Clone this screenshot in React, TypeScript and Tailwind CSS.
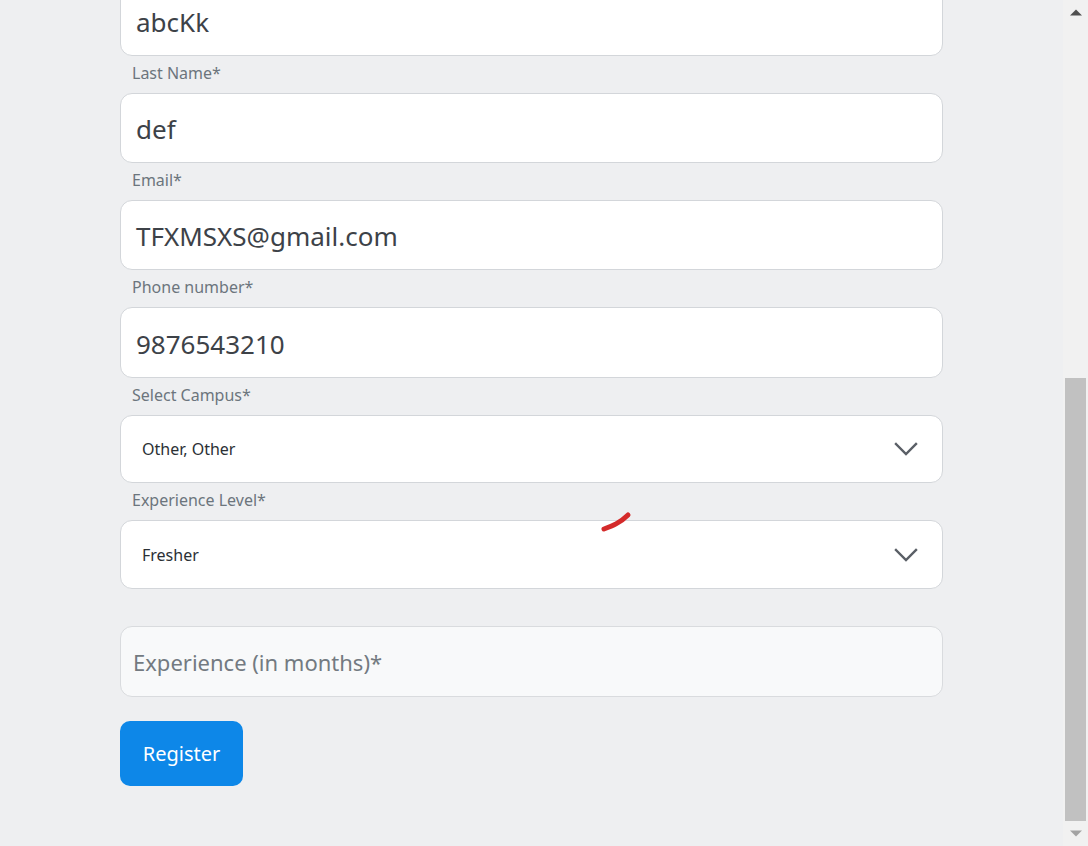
import React from "react";

const font = { fontFamily: '"Noto Sans", "Open Sans", sans-serif' };

function Label({ children }: { children?: React.ReactNode }) {
  return (
    <div className="h-[37px] pl-[12px] pt-[5px] text-[16px] leading-[24px] text-[#6c757d]">
      {children}
    </div>
  );
}

function TextField({ value, tall }: { value: string; tall?: boolean }) {
  return (
    <div
      className={`flex ${tall ? "h-[71px]" : "h-[70px]"} items-center rounded-[12px] border border-[#d3d6da] bg-white pl-[15px] pt-[3px] text-[26px] text-[#3d4248]`}
    >
      {value}
    </div>
  );
}

function Chevron() {
  return (
    <svg width="24" height="14" viewBox="0 0 24 14" fill="none">
      <path d="M2 2 L12 12 L22 2" stroke="#5a5f66" strokeWidth="2.4" strokeLinecap="square" />
    </svg>
  );
}

function SelectField({ value, short }: { value: string; short?: boolean }) {
  return (
    <div
      className={`flex ${short ? "h-[68px]" : "h-[69px]"} items-center justify-between rounded-[12px] border border-[#d3d6da] bg-white pl-[21px] pr-[24px] text-[16px] text-[#2b3035]`}
    >
      <span>{value}</span>
      <Chevron />
    </div>
  );
}

function Scrollbar() {
  return (
    <div className="flex h-[846px] w-[25px] flex-col bg-[#f1f1f1]">
      <div className="flex h-[25px] items-center justify-center">
        <svg width="12" height="7" viewBox="0 0 12 7">
          <path d="M0 6.5 L6 0.5 L12 6.5 Z" fill="#505050" />
        </svg>
      </div>
      <div className="flex-1 pt-[353px] pl-[2px] pr-[2px]">
        <div className="h-[443px] bg-[#c1c1c1]" />
      </div>
      <div className="flex h-[25px] items-center justify-center">
        <svg width="12" height="7" viewBox="0 0 12 7">
          <path d="M0 0.5 L6 6.5 L12 0.5 Z" fill="#a3a3a3" />
        </svg>
      </div>
    </div>
  );
}

export default function App() {
  return (
    <div className="flex h-[846px] w-[1088px] overflow-hidden bg-[#eeeff1]" style={font}>
      <div className="relative flex-1 overflow-hidden">
        <div className="mx-auto mt-[-14px] w-[823px]">
          <TextField value="abcKk" />
          <Label>Last Name*</Label>
          <TextField value="def" />
          <Label>Email*</Label>
          <TextField value="TFXMSXS@gmail.com" />
          <Label>Phone number*</Label>
          <TextField value="9876543210" tall />
          <Label>Select Campus*</Label>
          <SelectField value="Other, Other" short />
          <Label>Experience Level*</Label>
          <SelectField value="Fresher" />
          <Label />
          <div className="flex h-[71px] items-center rounded-[12px] border border-[#d9dbde] bg-[#f8f9fa] pl-[12px] pt-[2px] text-[22px] text-[#737a81]">
            Experience (in months)*
          </div>
          <button className="mt-[24px] flex h-[65px] w-[123px] items-center justify-center rounded-[10px] bg-[#0d87e8] text-[20px] text-white">
            Register
          </button>
        </div>
        <svg className="absolute left-[600px] top-[508px]" width="36" height="26" viewBox="0 0 36 26" fill="none">
          <path d="M4 21 C12 18 20 15 28 7" stroke="#d42a2a" strokeWidth="5" strokeLinecap="round" />
        </svg>
      </div>
      <Scrollbar />
    </div>
  );
}
